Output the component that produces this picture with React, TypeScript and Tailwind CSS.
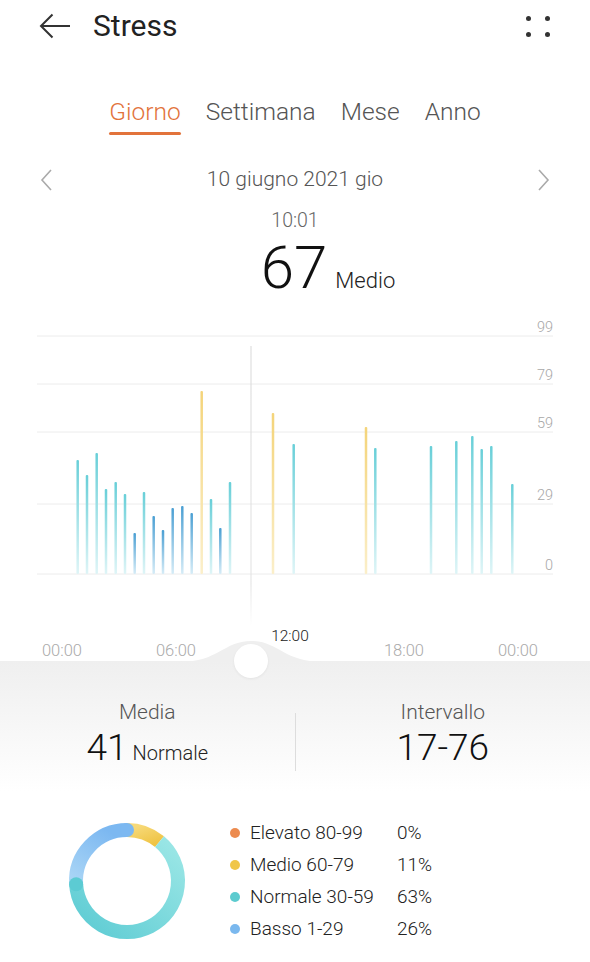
import React from "react";

type Kind = "t" | "b" | "y";

// x, top (page y), colour
const bars: [number, number, Kind][] = [
  [77.7, 459, "t"], [87, 474, "t"], [96.7, 452, "t"], [106, 488, "t"], [115.7, 481, "t"],
  [125, 493, "t"], [134.7, 532, "b"], [144, 491, "t"], [153.7, 515, "b"], [163, 529, "b"],
  [172.7, 507, "b"], [182.3, 505, "b"], [191.7, 512, "b"], [201.7, 390, "y"], [211, 498, "t"],
  [220.3, 527, "b"], [230, 481, "t"], [273, 412, "y"], [293.7, 443, "t"], [366, 426, "y"],
  [375.3, 447, "t"], [431, 445, "t"], [456.3, 440, "t"], [472.3, 435, "t"], [481.7, 448, "t"],
  [491.3, 445, "t"], [512.3, 483, "t"],
];

const grid: [number, string][] = [
  [335, "99"], [383, "79"], [431, "59"], [503, "29"], [573, "0"],
];

const TOP = 315;

function Chart() {
  return (
    <svg width="590" height="310" className="block">
      <defs>
        <linearGradient id="gt" x1="0" y1="0" x2="0" y2="1">
          <stop offset="0" stopColor="#68cfd8" />
          <stop offset="1" stopColor="#dff5f7" />
        </linearGradient>
        <linearGradient id="gb" x1="0" y1="0" x2="0" y2="1">
          <stop offset="0" stopColor="#4a9fd3" />
          <stop offset="1" stopColor="#d6ecf7" />
        </linearGradient>
        <linearGradient id="gy" x1="0" y1="0" x2="0" y2="1">
          <stop offset="0" stopColor="#f4d47a" />
          <stop offset="1" stopColor="#fbefca" />
        </linearGradient>
        <linearGradient id="gc" x1="0" y1="0" x2="0" y2="1">
          <stop offset="0" stopColor="#d8d8d8" />
          <stop offset="0.85" stopColor="#e2e2e2" />
          <stop offset="1" stopColor="#ffffff" />
        </linearGradient>
      </defs>
      {grid.map(([y, label]) => (
        <g key={label}>
          <line x1="37" x2="553" y1={y - TOP} y2={y - TOP} stroke="#ececec" strokeWidth="1" />
          <text
            x="553"
            y={y - TOP - 4}
            textAnchor="end"
            fontSize="14.5"
            fontWeight="300"
            fill="#a8a8a8"
            fontFamily="Roboto, sans-serif"
          >
            {label}
          </text>
        </g>
      ))}
      <rect x="250.5" y={345 - TOP} width="1" height={625 - 345} fill="url(#gc)" />
      {bars.map(([x, top, k], i) => (
        <rect
          key={i}
          x={x - 1.25}
          y={top - TOP}
          width="2.5"
          height={573 - top}
          rx="1"
          fill={k === "t" ? "url(#gt)" : k === "b" ? "url(#gb)" : "url(#gy)"}
        />
      ))}
    </svg>
  );
}

function arc(cx: number, cy: number, r: number, a0: number, a1: number) {
  const p = (a: number) => {
    const rad = (a * Math.PI) / 180;
    return [cx + r * Math.sin(rad), cy - r * Math.cos(rad)];
  };
  const [x0, y0] = p(a0);
  const [x1, y1] = p(a1);
  const large = a1 - a0 > 180 ? 1 : 0;
  return `M${x0} ${y0} A${r} ${r} 0 ${large} 1 ${x1} ${y1}`;
}

function Donut() {
  const cx = 65;
  const cy = 65;
  const r = 51;
  const yEnd = 39.6;
  const tEnd = 266.4;
  const endPt = (a: number) => {
    const rad = (a * Math.PI) / 180;
    return [cx + r * Math.sin(rad), cy - r * Math.cos(rad)];
  };
  const [bx, by] = endPt(360);
  const [tx, ty] = endPt(tEnd);
  return (
    <svg width="130" height="130" className="block shrink-0">
      <defs>
        <linearGradient id="dt" x1="1" y1="0" x2="0" y2="1">
          <stop offset="0" stopColor="#9ce7e6" />
          <stop offset="1" stopColor="#5ccbd3" />
        </linearGradient>
        <linearGradient id="db" x1="0" y1="1" x2="0.6" y2="0">
          <stop offset="0" stopColor="#abd6f6" />
          <stop offset="1" stopColor="#7cb8f1" />
        </linearGradient>
        <linearGradient id="dy" x1="0" y1="0" x2="1" y2="1">
          <stop offset="0" stopColor="#f7d978" />
          <stop offset="1" stopColor="#efc445" />
        </linearGradient>
      </defs>
      <path d={arc(cx, cy, r, 0, yEnd)} stroke="url(#dy)" strokeWidth="14" fill="none" />
      <path d={arc(cx, cy, r, tEnd, 360)} stroke="url(#db)" strokeWidth="14" fill="none" />
      <circle cx={bx} cy={by} r="7" fill="#7cb8f1" />
      <path d={arc(cx, cy, r, yEnd, tEnd)} stroke="url(#dt)" strokeWidth="14" fill="none" />
      <circle cx={tx} cy={ty} r="7" fill="#5ccbd3" />
    </svg>
  );
}

const legend = [
  { color: "bg-[#ec8b4f]", label: "Elevato 80-99", pct: "0%" },
  { color: "bg-[#f0c648]", label: "Medio 60-79", pct: "11%" },
  { color: "bg-[#5ccbcf]", label: "Normale 30-59", pct: "63%" },
  { color: "bg-[#7ab8ee]", label: "Basso 1-29", pct: "26%" },
];

export default function App() {
  return (
    <div className="w-[590px] h-[962px] bg-white overflow-hidden font-['Roboto',sans-serif] text-[#222]">
      {/* header */}
      <div className="h-[52px] flex items-center pl-[39px] pr-[40px]">
        <svg width="32" height="28" viewBox="0 0 32 28" className="shrink-0">
          <path d="M31 14H2M13.5 2.5L2 14l11.5 11.5" stroke="#333" strokeWidth="2" fill="none" />
        </svg>
        <div className="ml-[22px] text-[30px] leading-none text-[#222]">Stress</div>
        <div className="ml-auto grid grid-cols-2 gap-x-[14px] gap-y-[11px]">
          <span className="w-[5px] h-[5px] rounded-full bg-[#333]" />
          <span className="w-[5px] h-[5px] rounded-full bg-[#333]" />
          <span className="w-[5px] h-[5px] rounded-full bg-[#333]" />
          <span className="w-[5px] h-[5px] rounded-full bg-[#333]" />
        </div>
      </div>

      {/* tabs */}
      <div className="mt-[48px] flex justify-center gap-[25px] text-[24.5px] leading-[24px] font-light">
        <div className="flex flex-col items-stretch">
          <span className="text-[#e2733b]">Giorno</span>
          <span className="mt-[8px] h-[3px] rounded-full bg-[#e2733b]" />
        </div>
        <span className="text-[#555]">Settimana</span>
        <span className="text-[#555]">Mese</span>
        <span className="text-[#555]">Anno</span>
      </div>

      {/* date */}
      <div className="mt-[33px] flex items-center justify-between px-[40px] h-[24px]">
        <svg width="12" height="22" viewBox="0 0 12 22">
          <path d="M11 1L2 11l9 10" stroke="#aaa" strokeWidth="1.6" fill="none" />
        </svg>
        <span className="text-[21px] font-light text-[#555]">10 giugno 2021 gio</span>
        <svg width="12" height="22" viewBox="0 0 12 22">
          <path d="M1 1l9 10-9 10" stroke="#aaa" strokeWidth="1.6" fill="none" />
        </svg>
      </div>

      <div className="mt-[17px] text-center text-[19.5px] leading-[24px] font-light text-[#666]">10:01</div>
      <div className="mt-[13px] flex justify-center items-baseline pl-[66px] leading-[44px]">
        <span className="text-[60px] font-light text-[#111]">67</span>
        <span className="ml-[8px] text-[22px] font-light text-[#222]">Medio</span>
      </div>

      {/* chart */}
      <div className="mt-[13px]">
        <Chart />
      </div>

      {/* x axis */}
      <div className="flex items-end pl-[5px] h-[35px] text-[16.5px] leading-[20px] font-light text-[#aaa]">
        <span className="w-[114px] text-center">00:00</span>
        <span className="w-[114px] text-center">06:00</span>
        <span className="w-[114px] text-center mb-[15px] text-[15.5px] text-[#222]">12:00</span>
        <span className="w-[114px] text-center">18:00</span>
        <span className="w-[114px] text-center">00:00</span>
      </div>

      {/* summary */}
      <div className="relative h-[130px] bg-gradient-to-b from-[#efefef] to-white">
        <svg width="590" height="22" className="absolute left-0 -top-[21px]">
          <path d="M180 22C218 22 224 1 251 1C278 1 284 22 322 22Z" fill="#efefef" />
        </svg>
        <div className="absolute left-[234px] -top-[17px] w-[34px] h-[34px] rounded-full bg-white shadow-[0_1px_3px_rgba(0,0,0,0.06)]" />
        <div className="flex pt-[39px]">
          <div className="flex-1 flex flex-col items-center">
            <span className="text-[21px] leading-[24px] font-light text-[#555]">Media</span>
            <div className="mt-[6px] flex items-baseline">
              <span className="text-[37px] leading-[36px] font-light text-[#111]">41</span>
              <span className="ml-[5px] text-[20px] font-light text-[#222]">Normale</span>
            </div>
          </div>
          <div className="w-px h-[58px] mt-[13px] bg-[#ddd]" />
          <div className="flex-1 flex flex-col items-center">
            <span className="text-[21px] leading-[24px] font-light text-[#555]">Intervallo</span>
            <span className="mt-[6px] text-[37px] leading-[36px] font-light text-[#111]">17-76</span>
          </div>
        </div>
      </div>

      {/* distribution */}
      <div className="mt-[25px] flex items-center pl-[62px]">
        <Donut />
        <div className="ml-[38px] flex flex-col">
          {legend.map((l) => (
            <div key={l.label} className="h-[32px] flex items-center text-[19px] font-light text-[#222]">
              <span className={`w-[10px] h-[10px] rounded-full ${l.color}`} />
              <span className="ml-[10px] w-[147px]">{l.label}</span>
              <span>{l.pct}</span>
            </div>
          ))}
        </div>
      </div>
    </div>
  );
}
